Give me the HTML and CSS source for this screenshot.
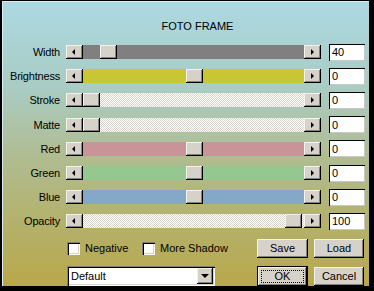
FILE: index.html
```html
<!DOCTYPE html>
<html lang="en">
<head>
    <meta charset="UTF-8">
    <title>Foto Frame</title>
    <link rel="stylesheet" href="styles.css">
</head>
<body>
    <div class="window">
        <div class="title">FOTO FRAME</div>

        <div class="sliders">
            <div class="row">
                <label class="label">Width</label>
                <div class="scroll">
                    <span class="arrow left"></span>
                    <div class="track gray"><span class="thumb" style="left: 17px"></span></div>
                    <span class="arrow right"></span>
                </div>
                <input class="value" type="text" value="40">
            </div>
            <div class="row">
                <label class="label">Brightness</label>
                <div class="scroll">
                    <span class="arrow left"></span>
                    <div class="track yellow"><span class="thumb" style="left: 103px"></span></div>
                    <span class="arrow right"></span>
                </div>
                <input class="value" type="text" value="0">
            </div>
            <div class="row">
                <label class="label">Stroke</label>
                <div class="scroll">
                    <span class="arrow left"></span>
                    <div class="track dither"><span class="thumb" style="left: 0"></span></div>
                    <span class="arrow right"></span>
                </div>
                <input class="value" type="text" value="0">
            </div>
            <div class="row">
                <label class="label">Matte</label>
                <div class="scroll">
                    <span class="arrow left"></span>
                    <div class="track dither"><span class="thumb" style="left: 0"></span></div>
                    <span class="arrow right"></span>
                </div>
                <input class="value" type="text" value="0">
            </div>
            <div class="row">
                <label class="label">Red</label>
                <div class="scroll">
                    <span class="arrow left"></span>
                    <div class="track red"><span class="thumb" style="left: 103px"></span></div>
                    <span class="arrow right"></span>
                </div>
                <input class="value" type="text" value="0">
            </div>
            <div class="row">
                <label class="label">Green</label>
                <div class="scroll">
                    <span class="arrow left"></span>
                    <div class="track green"><span class="thumb" style="left: 103px"></span></div>
                    <span class="arrow right"></span>
                </div>
                <input class="value" type="text" value="0">
            </div>
            <div class="row">
                <label class="label">Blue</label>
                <div class="scroll">
                    <span class="arrow left"></span>
                    <div class="track blue"><span class="thumb" style="left: 103px"></span></div>
                    <span class="arrow right"></span>
                </div>
                <input class="value" type="text" value="0">
            </div>
            <div class="row">
                <label class="label">Opacity</label>
                <div class="scroll">
                    <span class="arrow left"></span>
                    <div class="track dither"><span class="thumb" style="left: 202px"></span></div>
                    <span class="arrow right"></span>
                </div>
                <input class="value" type="text" value="100">
            </div>
        </div>

        <div class="bottom">
            <div class="checks">
                <span class="check"><span class="box"></span>Negative</span>
                <span class="check"><span class="box"></span>More Shadow</span>
            </div>
            <button class="btn">Save</button>
            <button class="btn">Load</button>

            <div class="combo">
                <span class="combo-text">Default</span>
                <span class="combo-btn"><span class="down"></span></span>
            </div>
            <button class="btn default"><span class="focus">OK</span></button>
            <button class="btn">Cancel</button>
        </div>
    </div>
</body>
</html>
```

FILE: styles.css
```css
* {
    margin: 0;
    padding: 0;
    box-sizing: border-box;
}

body {
    background: #000;
    font-family: "Liberation Sans", Arial, sans-serif;
    font-size: 11px;
    color: #000;
}

.window {
    width: 374px;
    height: 291px;
    border-top: 1px solid #000;
    border-left: 2px solid #000;
    border-right: 5px solid #000;
    border-bottom: 5px solid #000;
    background: linear-gradient(180deg, #acd9e2 0%, #a9ccc4 30%, #b0bc90 55%, #b4b068 80%, #b9a84a 100%);
    box-shadow: inset 1px 1px 0 #d8eef2;
    padding-top: 18px;
}

.title {
    text-align: center;
    height: 14px;
    line-height: 14px;
    padding-left: 24px;
}

.sliders {
    margin-top: 7px;
}

.row {
    display: grid;
    grid-template-columns: 58px 255px 36px;
    column-gap: 6px;
    align-items: center;
    height: 24.2px;
}

.label {
    text-align: right;
    letter-spacing: -0.2px;
}

.scroll {
    display: flex;
    height: 14px;
}

.arrow {
    position: relative;
    width: 17px;
    height: 14px;
    background: #d6d2ca;
    box-shadow: inset -1px -1px 0 #000, inset 1px 1px 0 #f4f2ee, inset -2px -2px 0 #848280;
}

.arrow::after {
    content: "";
    position: absolute;
    top: 4px;
    border-top: 3px solid transparent;
    border-bottom: 3px solid transparent;
}

.arrow.left::after {
    left: 6px;
    border-right: 3px solid #000;
}

.arrow.right::after {
    left: 7px;
    border-left: 3px solid #000;
}

.track {
    position: relative;
    flex: 1;
}

.thumb {
    position: absolute;
    top: 0;
    width: 17px;
    height: 14px;
    background: #d6d2ca;
    box-shadow: inset -1px -1px 0 #000, inset 1px 1px 0 #f4f2ee, inset -2px -2px 0 #848280;
}

.gray { background: #808080; }
.yellow { background: #c8c632; }
.red { background: #c89498; }
.green { background: #94c890; }
.blue { background: #84a8c8; }

.dither {
    background-color: #ffffff;
    background-image:
        linear-gradient(45deg, #d6d2ca 25%, transparent 25%, transparent 75%, #d6d2ca 75%),
        linear-gradient(45deg, #d6d2ca 25%, transparent 25%, transparent 75%, #d6d2ca 75%);
    background-size: 2px 2px;
    background-position: 0 0, 1px 1px;
}

.value {
    width: 36px;
    height: 17px;
    margin-left: 2px;
    border: none;
    background: #fff;
    font-family: "Liberation Sans", Arial, sans-serif;
    font-size: 11px;
    padding-left: 3px;
    box-shadow: inset 1px 1px 0 #000, inset -1px -1px 0 #c8c8c8;
    outline: none;
}

.bottom {
    display: grid;
    grid-template-columns: 184px 51px 50px;
    column-gap: 6px;
    row-gap: 8px;
    align-items: center;
    margin-top: 5px;
    padding-left: 65px;
}

.checks {
    display: flex;
}

.check {
    display: flex;
    align-items: center;
    gap: 5px;
    width: 75px;
    white-space: nowrap;
}

.box {
    flex-shrink: 0;
    width: 13px;
    height: 13px;
    background: #fff;
    box-shadow: inset 1px 1px 0 #808080, inset 2px 2px 0 #000, inset -1px -1px 0 #fff, inset -2px -2px 0 #d6d2ca;
}

.btn {
    height: 19px;
    font-family: "Liberation Sans", Arial, sans-serif;
    font-size: 11px;
    background: #d6d2ca;
    border: none;
    box-shadow: inset -1px -1px 0 #000, inset 1px 1px 0 #f4f2ee, inset -2px -2px 0 #848280;
}

.combo {
    display: flex;
    width: 148px;
    height: 20px;
    background: #fff;
    box-shadow: inset 1px 1px 0 #808080, inset 2px 2px 0 #000, inset -1px -1px 0 #fff, inset -2px -2px 0 #d6d2ca;
    padding: 2px;
}

.combo-text {
    flex: 1;
    line-height: 16px;
    padding-left: 2px;
}

.combo-btn {
    position: relative;
    width: 16px;
    height: 16px;
    background: #d6d2ca;
    box-shadow: inset -1px -1px 0 #000, inset 1px 1px 0 #f4f2ee, inset -2px -2px 0 #848280;
}

.down {
    position: absolute;
    left: 4px;
    top: 6px;
    border-left: 4px solid transparent;
    border-right: 4px solid transparent;
    border-top: 4px solid #000;
}

.btn.default {
    height: 21px;
    box-shadow: inset 0 0 0 1px #000, inset -2px -2px 0 #000, inset 2px 2px 0 #f4f2ee, inset -3px -3px 0 #848280;
    padding: 4px;
}

.focus {
    display: block;
    height: 13px;
    line-height: 11px;
    border: 1px dotted #000;
}
```
